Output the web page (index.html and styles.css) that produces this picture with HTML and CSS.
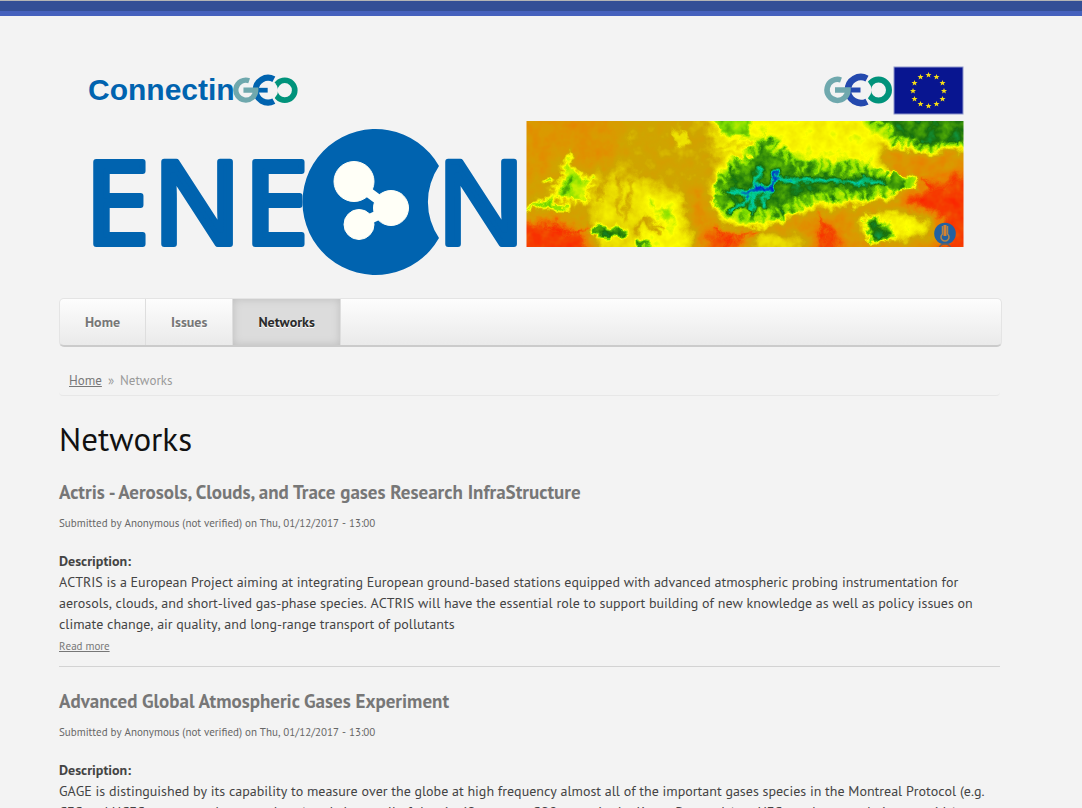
FILE: index.html
```html
<!DOCTYPE html>
<html lang="en">
<head>
<meta charset="utf-8">
<meta name="viewport" content="width=device-width, initial-scale=1">
<title>Networks | ENEON</title>
<link rel="stylesheet" href="styles.css">
</head>
<body>
<div class="topbar"></div>
<div class="page">
  <header class="banner">
    <svg class="banner-art" viewBox="-1 0 943 240" role="img" aria-label="ConnectinGEO ENEON">
      <defs>
        <filter id="soft" x="-20%" y="-20%" width="140%" height="140%"><feGaussianBlur stdDeviation="6"/></filter>
        <filter id="fine" x="-20%" y="-20%" width="140%" height="140%"><feGaussianBlur stdDeviation="1.500"/></filter>
        <filter id="slope" x="-20%" y="-20%" width="140%" height="140%"><feGaussianBlur stdDeviation="3"/></filter>
        <filter id="terrain" filterUnits="userSpaceOnUse" x="0" y="0" width="437" height="126" color-interpolation-filters="sRGB">
          <feTurbulence type="fractalNoise" baseFrequency="0.08" numOctaves="3" seed="7" result="n"/>
          <feDisplacementMap in="SourceGraphic" in2="n" scale="14" xChannelSelector="R" yChannelSelector="G" result="d"/>
          <feColorMatrix in="n" type="matrix" values="0 0 0 1 0  0 0 0 1 0  0 0 0 1 0  0 0 0 0 1" result="g"/>
          <feComposite in="d" in2="g" operator="arithmetic" k2="1" k3="0.14" k4="-0.07"/>
          <feComponentTransfer>
            <feFuncR type="table" tableValues="1 .96 .92 .86 .81 .91 1 .5 .1 0 0"/>
            <feFuncG type="table" tableValues=".08 .26 .5 .6 .65 .85 1 .87 .44 .82 .15"/>
            <feFuncB type="table" tableValues="0 0 0 0 0 0 0 0 .05 .6 .8"/>
            <feFuncA type="linear" slope="0" intercept="1"/>
          </feComponentTransfer>
        </filter>
        <clipPath id="mapclip"><rect width="437" height="126"/></clipPath>
        <g id="rings" fill="none" stroke-width="6.500">
          <circle cx="54.500" cy="16" r="10.500" stroke="#00937b" stroke-width="6"/>
          <circle cx="37" cy="16" r="10.500" fill="#f3f3f3"/>
          <path d="M43 4.500 A13 13 0 1 0 43 27.500" class="ring-e"/>
          <path d="M24 16H36.500" class="ring-e" stroke-width="5"/>
          <path d="M17 6 A10.500 10.500 0 1 0 24 16H11" stroke="#6fa8ad" stroke-width="5.500"/>
        </g>
      </defs>
      <use href="#rings" transform="translate(173 25) scale(.95)" class="rings-bright"/>
      <text x="28" y="50" class="connectin">Connectin</text>
      <use href="#rings" x="764" y="24" class="rings-deep"/>

      <g class="wordmark">
        <text x="25" y="194">E</text>
        <text x="93" y="194">N</text>
        <text x="184" y="194">E</text>
        <text x="377" y="194">N</text>
      </g>
      <path d="M379 116 A73 73 0 1 0 379 188 A64 64 0 0 1 379 116Z" fill="#0063af"/>
      <g fill="#fffff7" stroke="#fffff7">
        <path d="M296 133L331 159L299 174" fill="none" stroke-width="10"/>
        <circle cx="294" cy="131.500" r="20"/>
        <circle cx="331" cy="158" r="17.500"/>
        <circle cx="299" cy="174.500" r="15"/>
      </g>

      <rect x="834" y="17" width="69" height="47" fill="#081590" stroke="#8d96cb"/>
      <g fill="#f5dc16">
        <path id="star" d="M868.500 22l.8 2 2.200.1-1.700 1.300.6 2.100-1.900-1.200-1.900 1.200.6-2.100-1.700-1.300 2.200-.1z"/>
        <use href="#star" x="8" y="2"/><use href="#star" x="14" y="8"/><use href="#star" x="15.500" y="16"/>
        <use href="#star" x="14" y="24"/><use href="#star" x="8" y="29"/><use href="#star" y="31"/>
        <use href="#star" x="-8" y="29"/><use href="#star" x="-14" y="24"/><use href="#star" x="-15.500" y="16"/>
        <use href="#star" x="-14" y="8"/><use href="#star" x="-8" y="2"/>
      </g>

      <g transform="translate(466.500 71)">
        <g clip-path="url(#mapclip)">
          <g filter="url(#terrain)">
            <rect x="-30" y="-30" width="500" height="190" fill="#646464"/>
            <g filter="url(#soft)">
              <path d="M-30-30H85L95 30L70 50L30 35L0 70H-30Z" fill="#4a4a4a"/>
              <path d="M-30 100L25 97L65 112L75 150H-30Z" fill="#141414"/>
              <path d="M65 65L90 50L155 70L165 150H70Z" fill="#828282"/>
              <path d="M115 70L155 80L165 130L120 135Z" fill="#979797"/>
              <path d="M160 65L190 75L190 130L165 110Z" fill="#444"/>
              <path d="M175-20H350L360 30L375 50L365 80L290 90L240 110H210L183 80L195 40Z" fill="#949494"/>
              <path d="M350 20L450 35V150H210L180 115L215 107L290 88L370 75Z" fill="#454545"/>
              <path d="M395 65L450 45V150H405L415 105L370 84Z" fill="#151515"/>
              <path d="M180 104L225 112L215 140H170Z" fill="#222"/>
              <path d="M285 105L310 102L320 150H275Z" fill="#1d1d1d"/>
              <ellipse cx="368" cy="105" rx="38" ry="13" fill="#999"/>
              <path d="M230 110L290 118L265 135H220Z" fill="#808080"/>
            </g>
            <g filter="url(#slope)">
              <path d="M188 78L194 50L212 34L222 18L240 14L262 34L290 38L325 38L350 48L380 60L365 76L330 82L290 84L262 94L240 104L208 106L192 92Z" fill="#aaa"/>
              <path d="M325-10H450V28L400 32L360 26Z" fill="#a6a6a6"/>
            </g>
            <g filter="url(#fine)">
              <path d="M29 75L42 42L49 52L64 60L58 78L45 80Z" fill="#aaa" stroke="#a6a6a6" stroke-width="10" stroke-dasharray="3 4"/>
              <path d="M31 77L43 55L46 70Z" fill="#c0c0c0"/>
              <path d="M0 90L18 80L28 82M22 86L42 89M18 62L25 57" fill="none" stroke="#b2b2b2" stroke-width="5"/>
              <path d="M65 106L78 103L102 110L98 118L66 114ZM108 118L130 127H110Z" fill="#c8c8c8"/>
              <path d="M120 80L145 92L150 102L136 98Z" fill="#a8a8a8"/>
              <path d="M145 10L158 12L167 22L150 24Z" fill="#888"/>
              <path d="M76 48V63L72 80M91 52L93 95M105 60L98 100M118 98L133 115M115 99L110 115M118 96L140 108" fill="none" stroke="#686868" stroke-width="4"/>
              <path d="M185-8H227L221 17L192 12Z" fill="#b4b4b4"/>
              <path d="M185 33L240 36M190 28L230 22" stroke="#747474" stroke-width="3"/>
              <path d="M198 78L202 55L218 46L240 27L254 38L268 51L320 51L350 57L364 62L355 67L330 70L290 70L265 80L245 88L225 89L211 86Z" fill="#c8c8c8" stroke="#c4c4c4" stroke-width="22" stroke-dasharray="4 5 6 4 3 6"/>
              <path d="M204 91L220 76L233 68L243 66L250 53L265 58L330 60L358 62M240 66L237 88M232 68L223 92M257 57L270 62M218 71L202 70M230 65L235 48" fill="none" stroke="#e5e5e5" stroke-width="5"/>
              <path d="M214 73L232 67L244 67L251 48M244 67L241 72" fill="none" stroke="#fff" stroke-width="4"/>
              <path d="M338-10H450V18L400 24L372 18L365 8Z" fill="#c9c9c9" stroke="#c9c9c9" stroke-width="12" stroke-dasharray="3 5"/>
              <path d="M338 98L350 98L368 113L358 120H345Z" fill="#d0d0d0" stroke="#c0c0c0" stroke-width="7" stroke-dasharray="3 3"/>
              <ellipse cx="384" cy="61" rx="7" ry="5" fill="#aaa"/>
              <path d="M18 104L45 113L63 104M190 105L206 119L195 130M294 94L297 128M399 55L402 72M208 117L230 111" fill="none" stroke="#171717" stroke-width="3"/>
            </g>
          </g>
          <circle cx="418.500" cy="112.500" r="10.800" fill="#2261a0"/>
          <path d="M418.500 104V115" stroke="#d58231" stroke-width="3"/>
          <path d="M416 105V113A4 4 0 1 0 421 113V105" fill="none" stroke="#b28449" stroke-width="1.500"/>
          <path d="M413 126A6 5 0 0 1 424 126" fill="none" stroke="#746154" stroke-width="1.500"/>
        </g>
      </g>
    </svg>
  </header>

  <nav class="menu" aria-label="Main menu">
    <a href="#">Home</a>
    <a href="#">Issues</a>
    <a href="#" class="active" aria-current="page">Networks</a>
  </nav>

  <main class="content">
    <div class="breadcrumb"><a href="#">Home</a><span>»</span><span>Networks</span></div>
    <h1>Networks</h1>

    <article class="node">
      <h2><a href="#">Actris - Aerosols, Clouds, and Trace gases Research InfraStructure</a></h2>
      <p class="submitted">Submitted by Anonymous (not verified) on Thu, 01/12/2017 - 13:00</p>
      <h3>Description:</h3>
      <p>ACTRIS is a European Project aiming at integrating European ground-based stations equipped with advanced atmospheric probing instrumentation for aerosols, clouds, and short-lived gas-phase species. ACTRIS will have the essential role to support building of new knowledge as well as policy issues on climate change, air quality, and long-range transport of pollutants</p>
      <a class="more" href="#">Read more</a>
    </article>

    <article class="node">
      <h2><a href="#">Advanced Global Atmospheric Gases Experiment</a></h2>
      <p class="submitted">Submitted by Anonymous (not verified) on Thu, 01/12/2017 - 13:00</p>
      <h3>Description:</h3>
      <p>GAGE is distinguished by its capability to measure over the globe at high frequency almost all of the important gases species in the Montreal Protocol (e.g. CFC and HCFC to protect the ozone layer) and almost all of the significant non-CO2 gases in the Kyoto Protocol (e.g. HFC, methane, and nitrous oxide).</p>
    </article>
  </main>
</div>
</body>
</html>
```
FILE: styles.css
```css
* {
  box-sizing: border-box;
}

body {
  margin: 0;
  background: #f3f3f3;
  color: #444;
  font: 14px/21px "PT Sans", "Noto Sans", sans-serif;
  font-kerning: none;
}

.topbar {
  height: 16px;
  border-top: 1px solid #b5b5b5;
  border-bottom: 5px solid #4561bd;
  background: #344f96;
}

.page {
  padding: 34px 80px 0 59px;
}

.banner-art {
  display: block;
  width: 100%;
  height: auto;
}

.connectin {
  font: bold 30px "Liberation Sans", sans-serif;
  fill: #0063af;
}

.wordmark {
  font: 116px "Noto Sans", sans-serif;
  fill: #0063af;
  stroke: #0063af;
  stroke-width: 6px;
  stroke-linejoin: round;
}

.rings-bright {
  color: #0063af;
}

.rings-deep {
  color: #2449ae;
}

.ring-e {
  stroke: currentColor;
}

.menu {
  display: flex;
  height: 49px;
  margin-top: 8px;
  overflow: hidden;
  border: 1px solid #e4e4e4;
  border-bottom: 2px solid #cbcbcb;
  border-radius: 5px;
  background: linear-gradient(#fdfdfd, #eaeaea);
}

.menu a {
  padding: 0 25px;
  border-right: 1px solid #dedede;
  color: #777;
  font-size: 14px;
  font-weight: bold;
  line-height: 47px;
  text-decoration: none;
  text-shadow: 0 1px 0 #fff;
}

.menu .active {
  background: #dcdcdc;
  box-shadow: inset 0 0 8px #bdbdbd;
  color: #2b2b2b;
}

.content {
  padding-right: 2px;
}

.breadcrumb {
  display: flex;
  gap: 6px;
  margin-top: 23px;
  padding: 0 10px 4px;
  border-bottom: 1px solid #e7e7e7;
  border-radius: 4px;
  color: #999;
  font-size: 13px;
}

.breadcrumb a {
  color: #777;
}

h1 {
  margin: 23px 0 0;
  color: #111;
  font-size: 33px;
  font-weight: normal;
  line-height: 39px;
}

.node {
  margin-top: 20px;
  padding-bottom: 8px;
  border-bottom: 1px solid #d3d3d3;
}

h2 {
  margin: 0;
  font-size: 19px;
  font-kerning: normal;
  line-height: 28px;
}

h2 a {
  color: #777;
  text-decoration: none;
}

h3,
.node p {
  margin: 0;
  font-size: 14px;
  line-height: 21px;
}

.node .submitted {
  margin: 7px 0 17px;
  color: #666;
  font-size: 11px;
}

.more {
  display: block;
  color: #777;
  font-size: 11px;
  line-height: 23px;
}
```
